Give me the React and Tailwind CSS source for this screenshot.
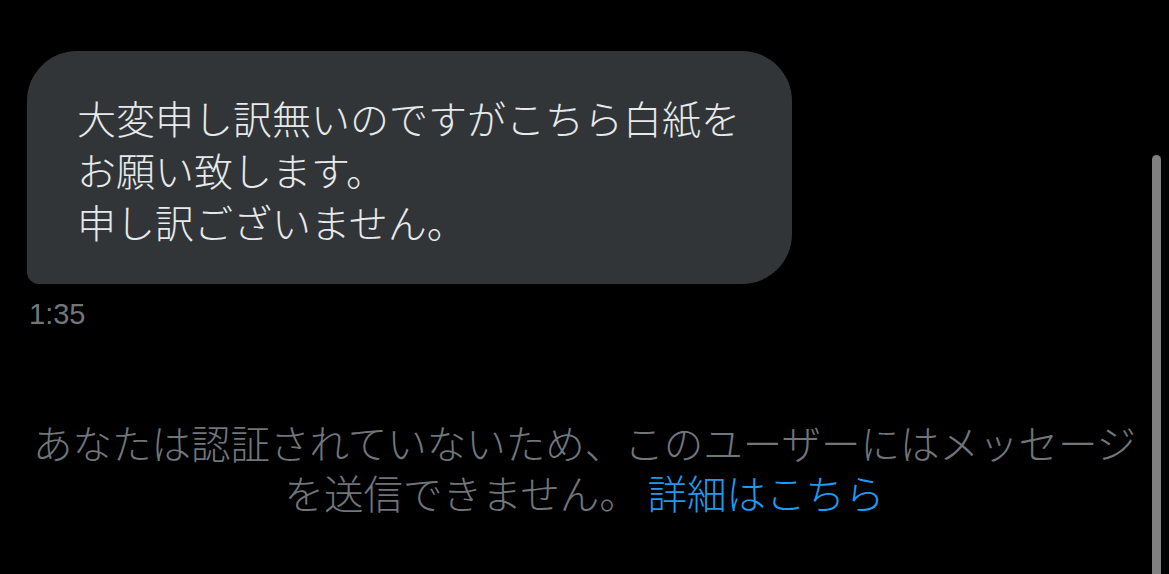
export default function App() {
  const jp = { fontFamily: '"Noto Sans CJK JP", "Noto Sans", sans-serif' };

  return (
    <div className="relative w-[1169px] h-[574px] overflow-hidden bg-black font-light" style={jp}>
      <div className="pt-[51px] pl-[27px]">
        <div className="w-fit bg-[#323538] text-[#e7e9ea] text-[39px] leading-[52px] pl-[50px] pr-[52px] pt-[40px] pb-[37px] rounded-tl-[50px] rounded-tr-[50px] rounded-br-[50px] rounded-bl-[12px]">
          <p>大変申し訳無いのですがこちら白紙を</p>
          <p>お願い致します。</p>
          <p>申し訳ございません。</p>
        </div>
        <div
          className="mt-[16px] pl-[2px] text-[29px] leading-[28px] font-normal text-[#71767b]"
          style={{ fontFamily: '"Liberation Sans", Arial, sans-serif' }}
        >
          1:35
        </div>
      </div>

      <div className="mt-[89px] flex flex-col items-center text-[39.5px] leading-[50px] text-[#71767b]">
        <p className="whitespace-nowrap">あなたは認証されていないため、このユーザーにはメッセージ</p>
        <p className="whitespace-nowrap">
          を送信できません。 <span className="text-[#1d9bf0]">詳細はこちら</span>
        </p>
      </div>

      {/* scrollbar thumb */}
      <div className="absolute right-[8px] top-[155px] bottom-0 w-[9px] rounded-t-full bg-[#808080]" />
    </div>
  );
}
